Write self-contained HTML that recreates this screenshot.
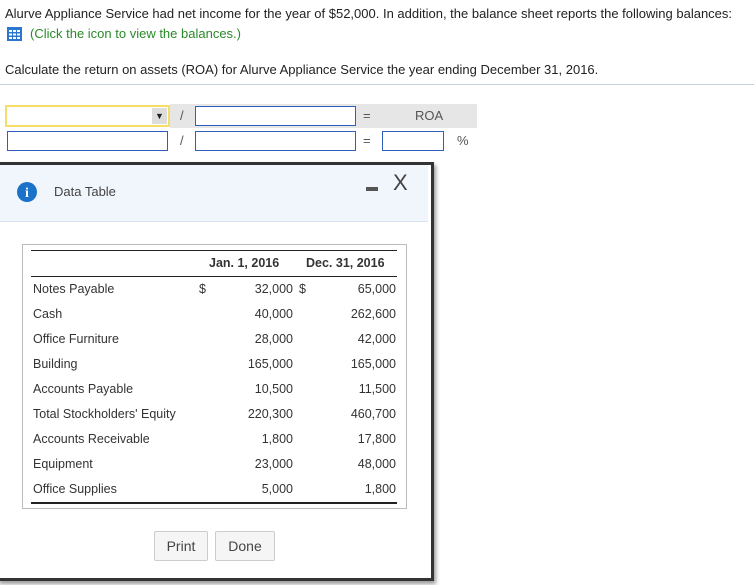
<!DOCTYPE html>
<html><head><style>
body{margin:0;width:754px;height:585px;background:#fff;font-family:"Liberation Sans",sans-serif;font-size:13px;color:#222;position:relative;overflow:hidden}
.a{position:absolute;white-space:nowrap}
.inp{position:absolute;border:1px solid #2f5fb8;background:#fff;box-sizing:border-box}
.num{position:absolute;text-align:right;font-size:12.5px;color:#333}
.lbl{position:absolute;font-size:12.5px;color:#333;left:33px}
</style></head><body>
<div class="a" style="left:5px;top:6px">Alurve Appliance Service had net income for the year of $52,000. In addition, the balance sheet reports the following balances:</div>
<svg class="a" style="left:7px;top:27px" width="15" height="14"><rect width="15" height="14" fill="#2b77d0"/><g fill="#fff"><rect x="2" y="3" width="3" height="2"/><rect x="6" y="3" width="3" height="2"/><rect x="10" y="3" width="3" height="2"/><rect x="2" y="6.5" width="3" height="2"/><rect x="6" y="6.5" width="3" height="2"/><rect x="10" y="6.5" width="3" height="2"/><rect x="2" y="10" width="3" height="2"/><rect x="6" y="10" width="3" height="2"/><rect x="10" y="10" width="3" height="2"/></g></svg>
<div class="a" style="left:30px;top:26px;color:#2a8a2a">(Click the icon to view the balances.)</div>
<div class="a" style="left:5px;top:62px">Calculate the return on assets (ROA) for Alurve Appliance Service the year ending December 31, 2016.</div>
<div class="a" style="left:0;top:84px;width:754px;height:1px;background:#c8d0dc"></div>
<div class="a" style="left:170px;top:104px;width:307px;height:24px;background:#e6e6e6"></div>
<div class="a" style="left:5px;top:105px;width:165px;height:22px;box-sizing:border-box;border:2px solid #f5dd6a;background:#fff"></div>
<div class="a" style="left:152px;top:108px;width:15px;height:16px;background:#ddd;font-size:9px;text-align:center;line-height:16px">▼</div>
<div class="a" style="left:180px;top:108px;color:#555">/</div>
<div class="inp" style="left:195px;top:106px;width:161px;height:20px"></div>
<div class="a" style="left:363px;top:108px;color:#555">=</div>
<div class="a" style="left:415px;top:108px;color:#555">ROA</div>
<div class="inp" style="left:7px;top:131px;width:161px;height:20px"></div>
<div class="a" style="left:180px;top:133px;color:#555">/</div>
<div class="inp" style="left:195px;top:131px;width:161px;height:20px"></div>
<div class="a" style="left:363px;top:133px;color:#555">=</div>
<div class="inp" style="left:382px;top:131px;width:62px;height:20px"></div>
<div class="a" style="left:457px;top:133px;color:#555">%</div>
<div class="a" style="left:-3px;top:162px;width:434px;height:413px;border:3px solid #333;border-left:none;background:#fff;box-shadow:2px 3px 4px rgba(0,0,0,.4)"></div>
<div class="a" style="left:0;top:165px;width:428px;height:56px;background:#f1f6fd;border-bottom:1px solid #d6e2f0"></div>
<svg class="a" style="left:17px;top:182px" width="20" height="20"><circle cx="10" cy="10" r="10" fill="#1a73c9"/><text x="10" y="15" font-family="Liberation Serif" font-weight="bold" font-size="14" fill="#fff" text-anchor="middle">i</text></svg>
<div class="a" style="left:54px;top:184px;color:#444">Data Table</div>
<div class="a" style="left:366px;top:187px;width:12px;height:4px;background:#555"></div>
<div class="a" style="left:393px;top:170px;font-size:22px;color:#444">X</div>
<div class="a" style="left:22px;top:244px;width:383px;height:263px;border:1px solid #bbb"></div>
<div class="a" style="left:31px;top:250px;width:366px;height:1px;background:#222"></div>
<div class="a" style="left:31px;top:276px;width:366px;height:1px;background:#222"></div>
<div class="a" style="left:31px;top:502px;width:366px;height:2px;background:#222"></div>
<div class="a" style="left:209px;top:256px;font-weight:bold;font-size:12.5px;color:#333">Jan. 1, 2016</div>
<div class="a" style="left:306px;top:256px;font-weight:bold;font-size:12.5px;color:#333">Dec. 31, 2016</div>
<div class="a" style="left:199px;top:282px;font-size:12.5px;color:#333">$</div>
<div class="a" style="left:299px;top:282px;font-size:12.5px;color:#333">$</div>
<div class="lbl" style="top:282px">Notes Payable</div><div class="num" style="right:461px;top:282px">32,000</div><div class="num" style="right:358px;top:282px">65,000</div>
<div class="lbl" style="top:307px">Cash</div><div class="num" style="right:461px;top:307px">40,000</div><div class="num" style="right:358px;top:307px">262,600</div>
<div class="lbl" style="top:332px">Office Furniture</div><div class="num" style="right:461px;top:332px">28,000</div><div class="num" style="right:358px;top:332px">42,000</div>
<div class="lbl" style="top:357px">Building</div><div class="num" style="right:461px;top:357px">165,000</div><div class="num" style="right:358px;top:357px">165,000</div>
<div class="lbl" style="top:382px">Accounts Payable</div><div class="num" style="right:461px;top:382px">10,500</div><div class="num" style="right:358px;top:382px">11,500</div>
<div class="lbl" style="top:407px">Total Stockholders' Equity</div><div class="num" style="right:461px;top:407px">220,300</div><div class="num" style="right:358px;top:407px">460,700</div>
<div class="lbl" style="top:432px">Accounts Receivable</div><div class="num" style="right:461px;top:432px">1,800</div><div class="num" style="right:358px;top:432px">17,800</div>
<div class="lbl" style="top:457px">Equipment</div><div class="num" style="right:461px;top:457px">23,000</div><div class="num" style="right:358px;top:457px">48,000</div>
<div class="lbl" style="top:482px">Office Supplies</div><div class="num" style="right:461px;top:482px">5,000</div><div class="num" style="right:358px;top:482px">1,800</div>
<div class="a" style="left:154px;top:531px;width:54px;height:30px;box-sizing:border-box;border:1px solid #ccc;border-radius:2px;background:#f5f5f5;text-align:center;line-height:28px;font-size:14px;color:#444">Print</div>
<div class="a" style="left:215px;top:531px;width:60px;height:30px;box-sizing:border-box;border:1px solid #ccc;border-radius:2px;background:#f5f5f5;text-align:center;line-height:28px;font-size:14px;color:#444">Done</div>
</body></html>
